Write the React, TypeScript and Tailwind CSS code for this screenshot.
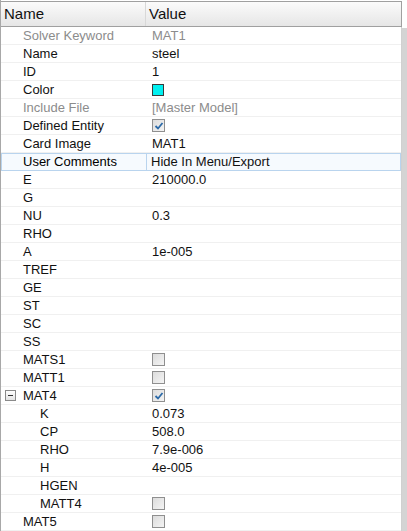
import React from 'react';

type Row = {
  name: string;
  value?: string;
  kind?: 'text' | 'color' | 'check' | 'checked';
  muted?: boolean;
  indent?: boolean;
  toggle?: boolean;
  selected?: boolean;
};

const ROWS: Row[] = [
  { name: 'Solver Keyword', value: 'MAT1', muted: true },
  { name: 'Name', value: 'steel' },
  { name: 'ID', value: '1' },
  { name: 'Color', kind: 'color' },
  { name: 'Include File', value: '[Master Model]', muted: true },
  { name: 'Defined Entity', kind: 'checked' },
  { name: 'Card Image', value: 'MAT1' },
  { name: 'User Comments', value: 'Hide In Menu/Export', selected: true },
  { name: 'E', value: '210000.0' },
  { name: 'G' },
  { name: 'NU', value: '0.3' },
  { name: 'RHO' },
  { name: 'A', value: '1e-005' },
  { name: 'TREF' },
  { name: 'GE' },
  { name: 'ST' },
  { name: 'SC' },
  { name: 'SS' },
  { name: 'MATS1', kind: 'check' },
  { name: 'MATT1', kind: 'check' },
  { name: 'MAT4', kind: 'checked', toggle: true },
  { name: 'K', value: '0.073', indent: true },
  { name: 'CP', value: '508.0', indent: true },
  { name: 'RHO', value: '7.9e-006', indent: true },
  { name: 'H', value: '4e-005', indent: true },
  { name: 'HGEN', indent: true },
  { name: 'MATT4', kind: 'check', indent: true },
  { name: 'MAT5', kind: 'check' },
];

const CheckBox: React.FC<{ checked?: boolean }> = ({ checked }) => (
  <span className="relative block w-[13px] h-[13px] border border-[#8f8f8f] bg-gradient-to-br from-[#dcdcdc] to-[#f4f4f4]">
    {checked && (
      <svg className="absolute left-[1px] top-[1px]" width="10" height="10" viewBox="0 0 10 10">
        <path d="M1.5 5 L4 7.5 L8.5 2" fill="none" stroke="#2c6aa8" strokeWidth="1.8" />
      </svg>
    )}
  </span>
);

const ValueCell: React.FC<{ row: Row }> = ({ row }) => {
  if (row.kind === 'color')
    return <span className="block w-[12px] h-[12px] border border-[#3a3a3a] bg-[#00f0f0]" />;
  if (row.kind === 'check') return <CheckBox />;
  if (row.kind === 'checked') return <CheckBox checked />;
  return <span className={row.muted ? 'text-[#8c8c8c]' : 'text-[#111]'}>{row.value}</span>;
};

export default function App() {
  return (
    <div
      className="w-[407px] h-[531px] overflow-hidden bg-white flex text-[13px] leading-[18px]"
      style={{ fontFamily: '"Liberation Sans", Arial, sans-serif' }}
    >
      <div className="w-[402px] flex flex-col border-l border-[#a8a8a8]">
        {/* header */}
        <div className="flex h-[27px] mt-[1px] border-t border-r border-b border-[#a0a0a0] bg-gradient-to-b from-[#fbfbfb] to-[#e6e6e6] text-[15px] text-[#111]">
          <div className="w-[145px] flex items-center pl-[3px] border-r border-[#d8d8d8]">Name</div>
          <div className="flex-1 flex items-center pl-[3px]">Value</div>
        </div>

        {/* rows */}
        <div className="flex-1 flex flex-col border-r border-[#d0d0d0]">
          {ROWS.map((row, i) =>
            row.selected ? (
              <div key={i} className="flex h-[18px] shrink-0 bg-[#f6fafe]">
                <div className="w-[146px] flex items-center pl-[21px] border border-[#b9d4ee]">
                  {row.name}
                </div>
                <div className="flex-1 flex items-center pl-[4px] border-y border-r border-[#b9d4ee]">
                  <ValueCell row={row} />
                </div>
              </div>
            ) : (
              <div key={i} className="flex h-[18px] shrink-0 border-b border-[#f0f0f0]">
                <div
                  className={`w-[146px] flex items-center ${row.indent ? 'pl-[39px]' : row.toggle ? 'pl-[4px]' : 'pl-[22px]'} ${row.muted ? 'text-[#8c8c8c]' : 'text-[#111]'}`}
                >
                  {row.toggle && (
                    <span className="w-[11px] h-[11px] mr-[7px] border border-[#8a8a8a] bg-gradient-to-b from-white to-[#e4e4e4] flex items-center justify-center">
                      <span className="w-[5px] h-[1px] bg-[#333]" />
                    </span>
                  )}
                  {row.name}
                </div>
                <div className="flex-1 flex items-center pl-[5px]">
                  <ValueCell row={row} />
                </div>
              </div>
            )
          )}
        </div>
      </div>
      {/* scrollbar strip */}
      <div className="w-[5px] mt-[28px] bg-[#d4d4d4]" />
    </div>
  );
}
